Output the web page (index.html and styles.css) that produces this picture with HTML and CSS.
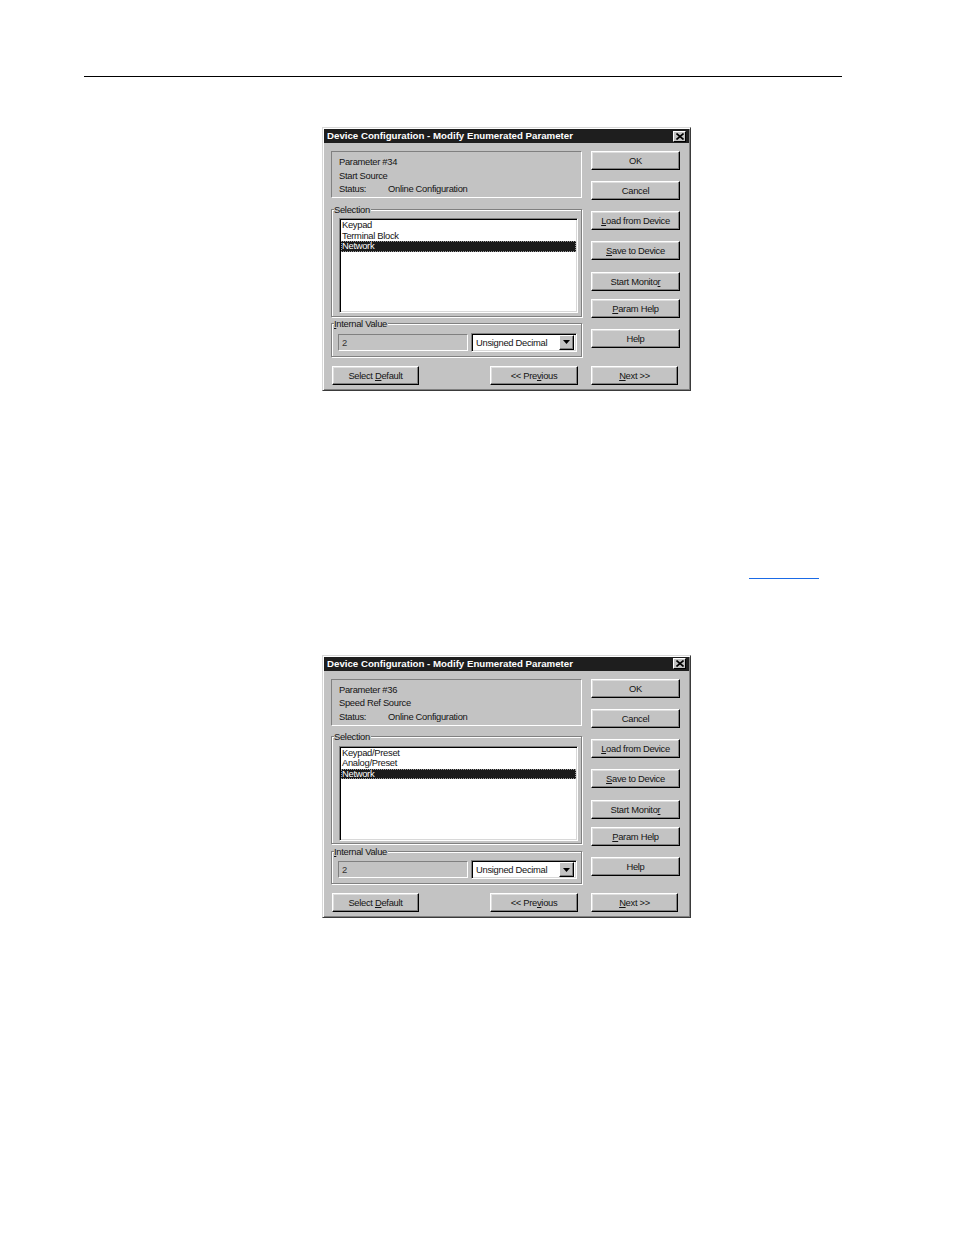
FILE: index.html
```html
<!DOCTYPE html>
<html>
<head>
<meta charset="utf-8">
<title>Device Configuration</title>
<link rel="stylesheet" href="styles.css">
</head>
<body>
<div class="page">
  <div class="rule"></div>

  <div class="dialog dialog-first">
    <div class="titlebar">
      <span class="title">Device Configuration - Modify Enumerated Parameter</span>
      <span class="close"><svg width="8" height="7" viewBox="0 0 8 7"><path d="M0.5 0.5 L7.5 6.5 M7.5 0.5 L0.5 6.5" stroke="#000" stroke-width="1.6" fill="none"/></svg></span>
    </div>
    <div class="dlg-body">
      <div class="left">
        <div class="info">
          <div class="info-line">Parameter #34</div>
          <div class="info-line">Start Source</div>
          <div class="info-line"><span class="status-label">Status:</span>Online Configuration</div>
        </div>
        <fieldset class="group group-sel">
          <legend>Selection</legend>
          <div class="listbox">
            <div class="item">Keypad</div>
            <div class="item">Terminal Block</div>
            <div class="item selected">Network</div>
          </div>
        </fieldset>
        <fieldset class="group group-iv">
          <legend><u>I</u>nternal Value</legend>
          <div class="iv-row">
            <div class="textbox">2</div>
            <div class="combo">
              <span class="combo-text">Unsigned Decimal</span>
              <span class="combo-btn"><svg width="7" height="4" viewBox="0 0 7 4"><path d="M0 0 H7 L3.5 4 Z" fill="#000"/></svg></span>
            </div>
          </div>
        </fieldset>
      </div>
      <div class="right">
        <button class="btn">OK</button>
        <button class="btn">Cancel</button>
        <button class="btn"><u>L</u>oad from Device</button>
        <button class="btn"><u>S</u>ave to Device</button>
        <button class="btn btn-loose">Start Monito<u>r</u></button>
        <button class="btn btn-tight"><u>P</u>aram Help</button>
        <button class="btn">Help</button>
      </div>
      <div class="bottom-left">
        <button class="btn btn-wide">Select <u>D</u>efault</button>
        <button class="btn btn-prev">&lt;&lt; Pre<u>v</u>ious</button>
      </div>
      <div class="bottom-right">
        <button class="btn btn-wide"><u>N</u>ext &gt;&gt;</button>
      </div>
    </div>
  </div>

  <div class="link-line"></div>

  <div class="dialog dialog-second">
    <div class="titlebar">
      <span class="title">Device Configuration - Modify Enumerated Parameter</span>
      <span class="close"><svg width="8" height="7" viewBox="0 0 8 7"><path d="M0.5 0.5 L7.5 6.5 M7.5 0.5 L0.5 6.5" stroke="#000" stroke-width="1.6" fill="none"/></svg></span>
    </div>
    <div class="dlg-body">
      <div class="left">
        <div class="info">
          <div class="info-line">Parameter #36</div>
          <div class="info-line">Speed Ref Source</div>
          <div class="info-line"><span class="status-label">Status:</span>Online Configuration</div>
        </div>
        <fieldset class="group group-sel">
          <legend>Selection</legend>
          <div class="listbox">
            <div class="item">Keypad/Preset</div>
            <div class="item">Analog/Preset</div>
            <div class="item selected">Network</div>
          </div>
        </fieldset>
        <fieldset class="group group-iv">
          <legend><u>I</u>nternal Value</legend>
          <div class="iv-row">
            <div class="textbox">2</div>
            <div class="combo">
              <span class="combo-text">Unsigned Decimal</span>
              <span class="combo-btn"><svg width="7" height="4" viewBox="0 0 7 4"><path d="M0 0 H7 L3.5 4 Z" fill="#000"/></svg></span>
            </div>
          </div>
        </fieldset>
      </div>
      <div class="right">
        <button class="btn">OK</button>
        <button class="btn">Cancel</button>
        <button class="btn"><u>L</u>oad from Device</button>
        <button class="btn"><u>S</u>ave to Device</button>
        <button class="btn btn-loose">Start Monito<u>r</u></button>
        <button class="btn btn-tight"><u>P</u>aram Help</button>
        <button class="btn">Help</button>
      </div>
      <div class="bottom-left">
        <button class="btn btn-wide">Select <u>D</u>efault</button>
        <button class="btn btn-prev">&lt;&lt; Pre<u>v</u>ious</button>
      </div>
      <div class="bottom-right">
        <button class="btn btn-wide"><u>N</u>ext &gt;&gt;</button>
      </div>
    </div>
  </div>
</div>
</body>
</html>
```

FILE: styles.css
```css
* { box-sizing: border-box; }
html, body { margin: 0; padding: 0; background: #fff; }
body {
  width: 954px;
  height: 1235px;
  overflow: hidden;
  font-family: "Liberation Sans", Arial, sans-serif;
}
.page { padding-top: 76px; }
.rule {
  margin-left: 84px;
  width: 758px;
  height: 1px;
  background: #000;
}
.link-line {
  margin-top: 187px;
  margin-left: 749px;
  width: 70px;
  height: 1px;
  background: #1a6ae6;
}

.dialog {
  margin-left: 322px;
  width: 369px;
  background: #c3c3c3;
  border: 1px solid;
  border-color: #d8d8d8 #3a3a3a #3a3a3a #d8d8d8;
  box-shadow: inset 1px 1px #fff, inset -1px -1px #808080;
  padding: 1px 1px 5px;
  font-size: 9.4px;
  letter-spacing: -0.3px;
  color: #141414;
}
.dialog-first { margin-top: 50px; }
.dialog-second { margin-top: 76px; }

.titlebar {
  height: 14px;
  background: #1e1e1e;
  display: flex;
  align-items: center;
  justify-content: space-between;
  padding: 0 3px 0 3px;
}
.title {
  color: #fff;
  font-weight: bold;
  font-size: 9.7px;
  letter-spacing: 0;
  line-height: 14px;
  white-space: nowrap;
}
.close {
  width: 13px;
  height: 11px;
  background: #c3c3c3;
  border: 1px solid;
  border-color: #fff #000 #000 #fff;
  display: flex;
  align-items: center;
  justify-content: center;
}

.dlg-body {
  display: grid;
  grid-template-columns: 251px 89px;
  column-gap: 9px;
  row-gap: 9px;
  padding: 8px 0 0 7px;
}
.left { display: flex; flex-direction: column; }
.right { display: flex; flex-direction: column; gap: 11px; }

.info {
  height: 47px;
  border: 1px solid;
  border-color: #808080 #fff #fff #808080;
  padding: 3px 0 0 7px;
  margin-bottom: 5.5px;
}
.info-line { line-height: 13.5px; height: 13.5px; white-space: nowrap; }
.status-label { display: inline-block; width: 49px; }

.group {
  margin: 0;
  min-width: 0;
  border: 1px solid #808080;
  box-shadow: inset 1px 1px #fff, 1px 1px #fff;
  padding: 3.5px 3px 2.5px 2px;
}
.group legend {
  padding: 0 1px 0 0;
  margin: 0;
  line-height: 11px;
  font-size: 9.4px;
  background: #c3c3c3;
}
.group-iv { margin-top: 1.5px; padding-bottom: 4px; }

.listbox {
  height: 95px;
  margin-left: 5px;
  background: #fff;
  border: 1px solid;
  border-color: #808080 #fff #fff #808080;
  box-shadow: inset 1px 1px #000, inset -1px -1px #d8d8d8;
  padding: 1px;
}
.item {
  height: 10.5px;
  line-height: 10.5px;
  padding-left: 1px;
  white-space: nowrap;
}
.item.selected {
  background: #1a1a1a;
  color: #fff;
  outline: 1px dotted #9a9a9a;
  outline-offset: -1px;
}

.iv-row {
  display: flex;
  align-items: center;
  gap: 3px;
  margin-left: 4px;
  height: 19px;
}
.textbox {
  width: 130px;
  height: 17px;
  border: 1px solid;
  border-color: #808080 #fff #fff #808080;
  padding-left: 3px;
  line-height: 15px;
  color: #333;
}
.combo {
  width: 106px;
  height: 19px;
  background: #fff;
  border: 1px solid;
  border-color: #808080 #fff #fff #808080;
  box-shadow: inset 1px 1px #000, inset -1px -1px #d8d8d8;
  display: flex;
  align-items: center;
  padding: 0 2px 0 4px;
}
.combo-text { white-space: nowrap; }
.combo-btn {
  margin-left: auto;
  width: 15px;
  height: 15px;
  background: #c3c3c3;
  border: 1px solid;
  border-color: #fff #000 #000 #fff;
  box-shadow: inset -1px -1px #808080;
  display: flex;
  align-items: center;
  justify-content: center;
}

.btn {
  font-family: "Liberation Sans", Arial, sans-serif;
  font-size: 9.4px;
  letter-spacing: -0.3px;
  color: #141414;
  width: 89px;
  height: 19px;
  padding: 0;
  margin: 0;
  background: #c3c3c3;
  border: 1px solid;
  border-color: #fff #000 #000 #fff;
  box-shadow: inset -1px -1px #808080, inset 1px 1px #dedede;
  white-space: nowrap;
  line-height: 17px;
}
.btn-loose { margin-top: 1px; }
.btn-tight { margin-top: -3px; }
.btn-wide { width: 87px; }
.btn-prev { width: 88px; }

.bottom-left {
  display: flex;
  justify-content: space-between;
  padding: 0 4px 0 1px;
}
.bottom-right { display: flex; }
```
